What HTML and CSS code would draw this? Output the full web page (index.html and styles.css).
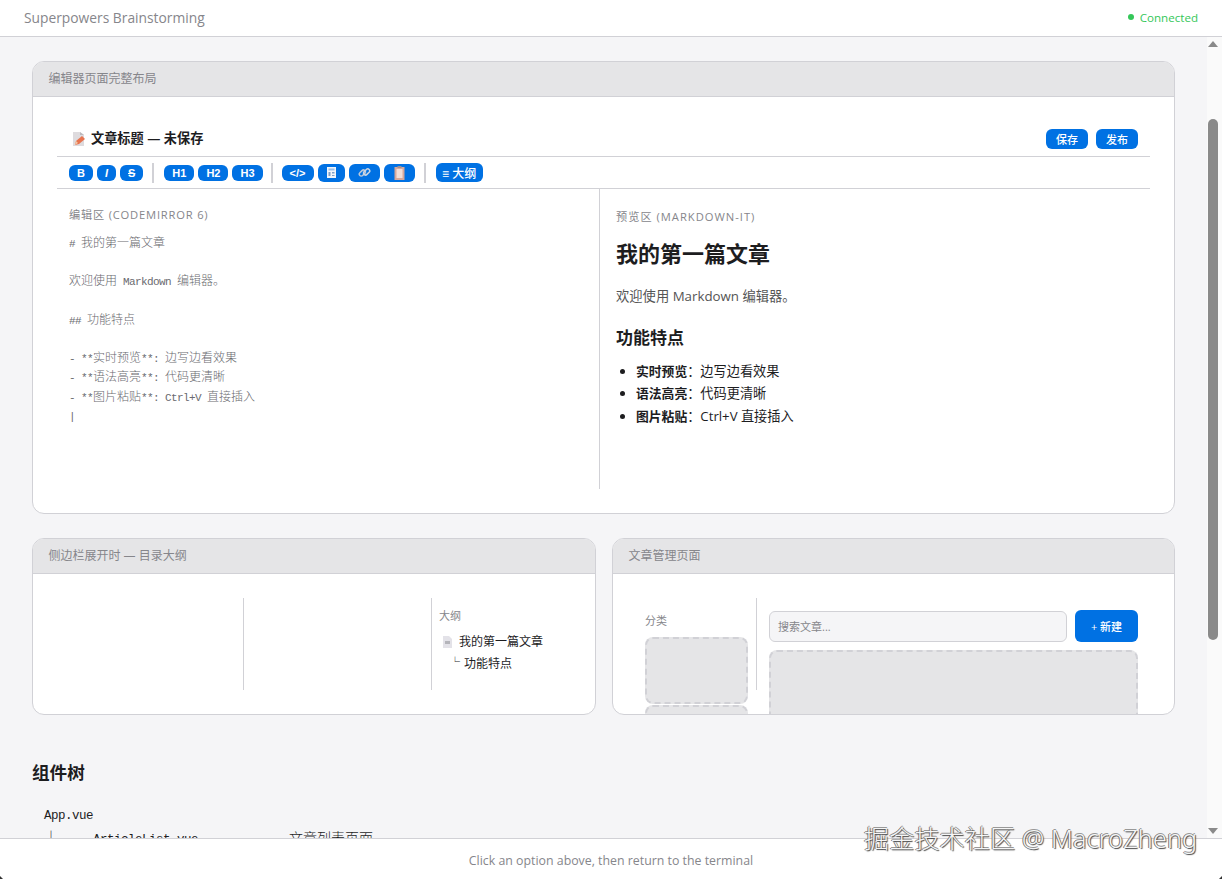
FILE: index.html
```html
<!DOCTYPE html>
<html lang="zh">
<head>
<meta charset="utf-8">
<title>Superpowers Brainstorming</title>
<link rel="stylesheet" href="styles.css">
</head>
<body>
<header class="top">
  <h1 class="top-title">Superpowers Brainstorming</h1>
  <div class="status"><span class="dot"></span>Connected</div>
</header>
<div class="middle">
  <main class="content">
    <section class="card card-main">
      <div class="card-head">编辑器页面完整布局</div>
      <div class="card-body">
        <div class="titlebar">
          <div class="doc-title">
            <svg class="ico-title" viewBox="0 0 12 14"><path d="M0 0h7l4 3v11H0z" fill="#dedbde"/><path d="M7 0l4 3H7z" fill="#bdb9bd"/><path d="M2 13l1-4 6-5 3 3-6 5z" fill="#e8744f"/><path d="M2 13l1-4 2 2z" fill="#f3c9a8"/></svg>
            <span>文章标题 — 未保存</span>
          </div>
          <div class="doc-actions">
            <span class="btn-sm">保存</span>
            <span class="btn-sm">发布</span>
          </div>
        </div>
        <div class="toolbar">
          <span class="pill b">B</span><span class="pill i">I</span><span class="pill s">S</span>
          <span class="sep"></span>
          <span class="pill b">H1</span><span class="pill b">H2</span><span class="pill b">H3</span>
          <span class="sep sep-tight"></span>
          <span class="pill b code-btn">&lt;/&gt;</span>
          <span class="pill emoji"><svg class="ico" viewBox="0 0 11 11"><path d="M1 0h9v11H1z" fill="#f2f5fa"/><path d="M2.500 1.500h6v2h-6z" fill="#9cc0e8"/><path d="M2.500 5h2v4h-2zM6 5h2.500v1.500H6zM6 8h2.500v1H6z" fill="#7f9fc6"/></svg></span>
          <span class="pill emoji wide"><svg class="ico ico-link" viewBox="0 0 12 12"><rect x="0.800" y="4.700" width="6.400" height="3.600" rx="1.800" transform="rotate(-45 4 6.500)" fill="none" stroke="#b9c6d8" stroke-width="1.400"/><rect x="4.800" y="3.700" width="6.400" height="3.600" rx="1.800" transform="rotate(-45 8 5.500)" fill="none" stroke="#cbd5e3" stroke-width="1.400"/></svg></span>
          <span class="pill emoji wide"><svg class="ico ico-clip" viewBox="0 0 10 14"><path d="M0 1h10v13H0z" fill="#d8a89a"/><path d="M2 3h6v9H2z" fill="#f2ded8"/><path d="M3 0h4v2H3z" fill="#9a8f96"/></svg></span>
          <span class="sep"></span>
          <span class="pill outline-btn">≡ 大纲</span>
        </div>
        <div class="split">
          <div class="pane-edit">
            <div class="label">编辑区 (CodeMirror 6)</div>
            <pre class="code"><span class="l"># </span>我的第一篇文章

欢迎使用<span class="l"> Markdown </span>编辑器。

<span class="l">## </span>功能特点

<span class="l">- **</span>实时预览<span class="l">**: </span>边写边看效果
<span class="l">- **</span>语法高亮<span class="l">**: </span>代码更清晰
<span class="l">- **</span>图片粘贴<span class="l">**: Ctrl+V </span>直接插入
<span class="l">|</span></pre>
          </div>
          <div class="pane-preview">
            <div class="label label-preview">预览区 (markdown-it)</div>
            <h2 class="md-h1">我的第一篇文章</h2>
            <p class="md-p">欢迎使用 Markdown 编辑器。</p>
            <h3 class="md-h2">功能特点</h3>
            <ul class="md-list">
              <li><strong>实时预览</strong>：边写边看效果</li>
              <li><strong>语法高亮</strong>：代码更清晰</li>
              <li><strong>图片粘贴</strong>：Ctrl+V 直接插入</li>
            </ul>
          </div>
        </div>
      </div>
    </section>

    <div class="row">
      <section class="card card-small">
        <div class="card-head">侧边栏展开时 — 目录大纲</div>
        <div class="card-body">
          <div class="cols">
            <div class="col-blank"></div>
            <div class="col-blank"></div>
            <div class="col-outline">
              <div class="outline-label">大纲</div>
              <div class="outline-item"><svg class="ico-doc" viewBox="0 0 9 12"><path d="M0 0h6l3 3v9H0z" fill="#e3e2e8"/><path d="M2 5h5v3H2z" fill="#b4b4ba"/></svg>我的第一篇文章</div>
              <div class="outline-sub"><span class="corner">└</span>功能特点</div>
            </div>
          </div>
        </div>
      </section>
      <section class="card card-small">
        <div class="card-head">文章管理页面</div>
        <div class="card-body">
          <div class="cols">
            <div class="col-cats">
              <div class="cat-label">分类</div>
              <div class="ph ph-cat"></div>
              <div class="ph ph-cat"></div>
            </div>
            <div class="col-list">
              <div class="search-row">
                <div class="search">搜索文章...</div>
                <div class="btn-new">+ 新建</div>
              </div>
              <div class="ph ph-list"></div>
            </div>
          </div>
        </div>
      </section>
    </div>

    <h2 class="tree-title">组件树</h2>
    <pre class="tree"><span class="t">App.vue</span>
├──<span class="t"> ArticleList.vue          </span>—<span class="t"> </span>文章列表页面</pre>
  </main>
  <aside class="scrollbar">
    <span class="arrow-up"></span>
    <span class="thumb"></span>
    <span class="arrow-down"></span>
  </aside>
</div>
<footer class="bottom">Click an option above, then return to the terminal</footer>
<div class="watermark">掘金技术社区 @ MacroZheng</div>
<span class="win-corner win-corner-left"></span>
<span class="win-corner win-corner-right"></span>
</body>
</html>
```
FILE: styles.css
```css
* { box-sizing: border-box; }
html, body { height: 100%; }
body {
  margin: 0;
  height: 100vh;
  display: flex;
  flex-direction: column;
  overflow: hidden;
  background: #fff;
  color: #1d1d1f;
  font-family: "Open Sans", "Noto Sans CJK SC", sans-serif;
}
.top {
  flex: none;
  height: 37px;
  display: flex;
  justify-content: space-between;
  align-items: center;
  padding: 0 24px 2px;
  background: #fff;
  border-bottom: 1px solid #d1d1d6;
}
.top-title { margin: 0; font-size: 13.8px; font-weight: 400; color: #86868b; }
.status { display: flex; align-items: center; gap: 6px; font-size: 11.6px; color: #34c759; }
.dot { width: 6px; height: 6px; border-radius: 50%; background: #34c759; }
.middle { flex: 1; min-height: 0; display: flex; }
.content { flex: 1; min-width: 0; overflow: hidden; padding: 24px 32px; background: #f5f5f7; }
.scrollbar {
  flex: none;
  width: 15px;
  display: flex;
  flex-direction: column;
  align-items: center;
  padding-right: 3px;
  background: #fafafa;
}
.arrow-up { margin-top: 4px; border: 5px solid transparent; border-top: 0; border-bottom: 6px solid #8a8a8a; }
.thumb { margin-top: 72px; width: 10px; height: 521px; border-radius: 5px; background: #8a8a8a; }
.arrow-down { margin-top: auto; margin-bottom: 4px; border: 5px solid transparent; border-bottom: 0; border-top: 6px solid #8a8a8a; }
.bottom {
  flex: none;
  height: 41px;
  display: flex;
  align-items: center;
  justify-content: center;
  padding-top: 2px;
  background: #fff;
  border-top: 1px solid #d1d1d6;
  font-size: 12.35px;
  color: #86868b;
}
.watermark {
  position: absolute;
  left: 864px;
  top: 821px;
  font-size: 25px;
  letter-spacing: 0.2px;
  line-height: 34px;
  font-family: "Noto Sans", "Noto Sans CJK SC", sans-serif;
  font-weight: 300;
  color: #f6f6f6;
  white-space: nowrap;
  text-shadow: 1px 1px 1px #444, -1px 0 0 #777, 0 -1px 0 #999;
}
.win-corner { position: absolute; bottom: 0; width: 3px; height: 3px; background: #333; }
.win-corner-left { left: 0; clip-path: polygon(0 0, 100% 100%, 0 100%); }
.win-corner-right { right: 0; clip-path: polygon(100% 0, 100% 100%, 0 100%); }

.card {
  background: #fff;
  border: 1px solid #d1d1d6;
  border-radius: 12px;
  overflow: hidden;
}
.card-main { margin-bottom: 24px; }
.card-head {
  height: 35px;
  padding: 0 15.5px 2px;
  display: flex;
  align-items: center;
  background: #e5e5e7;
  border-bottom: 1px solid #d1d1d6;
  font-size: 12px;
  color: #86868b;
}
.card-body { padding: 24px; }

.titlebar {
  height: 36px;
  display: flex;
  justify-content: space-between;
  padding: 8px 12px 0 16px;
  border-bottom: 1px solid #d1d1d6;
}
.doc-title { display: flex; align-items: center; height: 17px; gap: 6px; font-size: 13.2px; font-weight: 700; color: #1d1d1f; }
.ico-title { width: 12px; height: 14px; margin-top: 3px; }
.doc-actions { display: flex; gap: 8px; }
.btn-sm {
  width: 42px;
  height: 20px;
  display: flex;
  align-items: center;
  justify-content: center;
  border-radius: 6px;
  background: #0071e3;
  color: #fff;
  font-size: 11px;
  font-weight: 500;
}
.toolbar {
  height: 32px;
  display: flex;
  align-items: center;
  gap: 4px;
  padding: 0 12px;
  border-bottom: 1px solid #d1d1d6;
}
.pill {
  display: flex;
  align-items: center;
  justify-content: center;
  height: 16px;
  padding: 0 8px;
  border-radius: 6px;
  background: #0071e3;
  color: #fff;
  font-family: "Liberation Sans", "Noto Sans CJK SC", sans-serif;
  font-size: 11px;
  font-weight: 700;
}
.pill.i { font-style: italic; }
.pill.s { text-decoration: line-through; }
.pill.code-btn { width: 32px; padding: 0; }
.pill.emoji { height: 18px; width: 27px; padding: 0; }
.pill.emoji.wide { width: 31px; }
.ico { width: 11px; height: 11px; }
.ico-link { width: 13px; height: 13px; }
.ico-clip { height: 14px; }
.sep { width: 2px; height: 20px; margin: 0 6px 0 5px; background: #d1d1d6; }
.sep-tight { margin: 0 5px 0 4px; }
.outline-btn { height: 19px; width: 47px; padding: 0; font-size: 12px; font-weight: 500; }

.split { display: flex; height: 300px; }
.pane-edit { flex: 0 0 543px; padding: 18px 12px 0; border-right: 1px solid #d1d1d6; }
.pane-preview { flex: 1; min-width: 0; padding: 20px 16px 0; }
.label { font-size: 11.2px; line-height: 15px; text-transform: uppercase; letter-spacing: 0.8px; color: #86868b; }
.label-preview { letter-spacing: 1px; }
.code {
  margin: 10px 0 0;
  font-family: "Noto Sans CJK SC", sans-serif;
  font-size: 12px;
  font-weight: 300;
  line-height: 19.2px;
  color: #6a6a6f;
}
.l { font-family: "Liberation Mono", monospace; font-size: 11px; line-height: 0; letter-spacing: -0.6px; white-space: pre; }
.md-h1 { margin: 12px 0 0; font-size: 22px; line-height: 34px; font-weight: 700; color: #1d1d1f; }
.md-p { margin: 15px 0 0; font-size: 13.3px; line-height: 22px; color: #555; }
.md-h2 { margin: 19px 0 0; font-size: 17px; line-height: 24px; font-weight: 700; color: #1d1d1f; }
.md-list { margin: 10px 0 0; padding-left: 20px; font-size: 13.2px; line-height: 22.3px; color: #1d1d1f; }
.md-list strong { font-size: 12.8px; font-weight: 700; }

.row { display: grid; grid-template-columns: 564px 563px; gap: 16px; }
.card-small { height: 177px; }
.cols { display: flex; height: 92px; }
.col-blank { flex: 0 0 187px; border-right: 1px solid #d1d1d6; }
.col-blank + .col-blank { flex-basis: 188px; }
.col-outline { flex: 1; min-width: 0; padding: 10px 7px 0; }
.outline-label { font-size: 11px; line-height: 16px; color: #86868b; }
.outline-item { display: flex; align-items: center; gap: 7px; margin-top: 7px; padding-left: 4px; font-size: 12px; line-height: 22px; }
.ico-doc { width: 9px; height: 12px; }
.outline-sub { margin-top: -2px; padding-left: 14px; font-size: 12px; line-height: 22px; }
.corner { display: inline-block; width: 14px; margin-left: -3px; font-size: 10px; font-weight: 700; vertical-align: 2px; }

.col-cats { flex: 0 0 120px; padding: 15px 8px 0; border-right: 1px solid #d1d1d6; }
.cat-label { font-size: 11px; line-height: 16px; color: #86868b; margin-bottom: 8px; }
.ph { background: #e5e5e7; border: 2px dashed #d1d1d6; border-radius: 8px; }
.ph-cat { height: 67px; margin-bottom: 1px; width: 103px; }
.col-list { flex: 1; min-width: 0; padding: 12px 12px 0; }
.search-row { display: flex; gap: 8px; }
.search {
  flex: 1;
  margin-top: 1px;
  height: 31px;
  display: flex;
  align-items: center;
  padding: 0 8px 2px;
  background: #f5f5f7;
  border: 1px solid #d1d1d6;
  border-radius: 6px;
  font-size: 11px;
  color: #86868b;
}
.btn-new {
  flex: 0 0 63px;
  height: 32px;
  display: flex;
  align-items: center;
  justify-content: center;
  border-radius: 6px;
  background: #0071e3;
  color: #fff;
  font-size: 11px;
  font-weight: 500;
}
.ph-list { height: 120px; margin-top: 8px; }

.tree-title { margin: 45px 0 0; font-size: 17.6px; line-height: 24px; font-weight: 700; color: #1d1d1f; }
.tree {
  margin: 16.5px 0 0;
  padding-left: 12px;
  font-family: "Noto Sans CJK SC", sans-serif;
  font-size: 14px;
  font-weight: 300;
  line-height: 24px;
  color: #1d1d1f;
}
.t { font-family: "Liberation Mono", monospace; font-size: 12.500px; line-height: 0; letter-spacing: -0.5px; white-space: pre; }
```
